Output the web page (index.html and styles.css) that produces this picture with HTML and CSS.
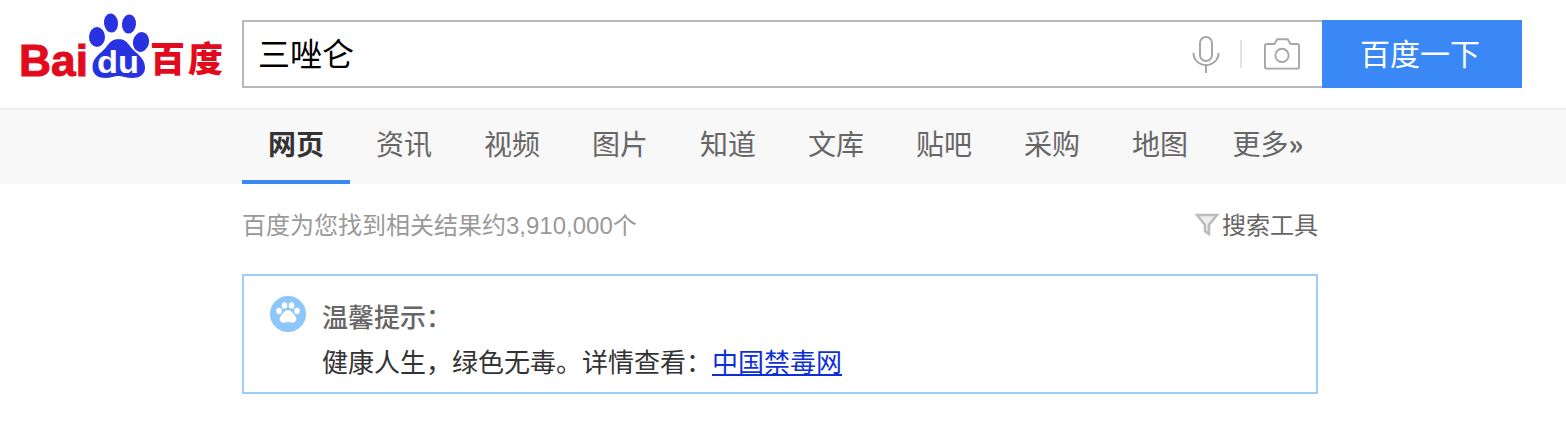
FILE: index.html
```html
<!DOCTYPE html>
<html lang="zh">
<head>
<meta charset="utf-8">
<title>三唑仑_百度搜索</title>
<link rel="stylesheet" href="styles.css">
</head>
<body>
<header class="head">
  <svg class="logo" width="204" height="68" viewBox="0 0 204 68">
    <text class="logo-bai" x="-1" y="64" textLength="69" lengthAdjust="spacingAndGlyphs">Bai</text>
    <g fill="#2932e1">
      <ellipse cx="77" cy="25" rx="8" ry="10"/>
      <ellipse cx="91" cy="11" rx="7" ry="9.500" transform="rotate(-6 91 11)"/>
      <ellipse cx="109" cy="12" rx="7" ry="9.500" transform="rotate(6 109 12)"/>
      <ellipse cx="121" cy="30" rx="8" ry="10" transform="rotate(12 121 30)"/>
      <path d="M98.500 27c7 0 10 5 13 9 4 5 13 9 13.500 19 .5 8-6 11-13 11-5 0-10-2-13.500-2s-8 2-13 2c-7 0-13-3-13-11 0-10 9-14 13-19 3-4 6-9 13.500-9z"/>
    </g>
    <text class="logo-du" x="77" y="61" textLength="42" lengthAdjust="spacingAndGlyphs">du</text>
    <text class="logo-cn" x="130" y="60" textLength="73">百度</text>
  </svg>
  <form class="search">
    <div class="box">
      <span class="query">三唑仑</span>
      <svg class="mic" width="28" height="38" viewBox="0 0 28 38" fill="none" stroke="#a6a6a6" stroke-width="2">
        <rect x="8" y="1" width="12" height="24" rx="6"/>
        <path d="M1.500 17c0 7 5.500 12 12.500 12s12.500-5 12.500-12M14 29v8"/>
      </svg>
      <i class="sep"></i>
      <svg class="cam" width="36" height="33" viewBox="0 0 38 34" fill="none" stroke="#a6a6a6" stroke-width="2">
        <path d="M3 7h8l3-5h11l3 5h7a2 2 0 0 1 2 2v22a2 2 0 0 1-2 2H3a2 2 0 0 1-2-2V9a2 2 0 0 1 2-2z"/>
        <circle cx="19" cy="19" r="7"/>
      </svg>
    </div>
    <button class="go" type="button">百度一下</button>
  </form>
</header>
<nav class="tabs">
  <a class="tab on">网页</a>
  <a class="tab">资讯</a>
  <a class="tab">视频</a>
  <a class="tab">图片</a>
  <a class="tab">知道</a>
  <a class="tab">文库</a>
  <a class="tab">贴吧</a>
  <a class="tab">采购</a>
  <a class="tab">地图</a>
  <a class="tab">更多<b>»</b></a>
</nav>
<main class="main">
  <div class="stats">
    <span>百度为您找到相关结果约3,910,000个</span>
    <span class="tools">
      <svg width="24" height="24" viewBox="0 0 24 24" fill="#ededed" stroke="#bcbcbc" stroke-width="2.500"><path d="M2 3h20l-8 10v9l-4-3v-6z"/></svg>
      搜索工具
    </span>
  </div>
  <section class="tip">
    <svg class="paw" width="36" height="36" viewBox="0 0 36 36">
      <circle cx="18" cy="18" r="18" fill="#8cc6fb"/>
      <g fill="#fff">
        <ellipse cx="9" cy="15" rx="2.800" ry="3.200"/>
        <ellipse cx="14.500" cy="9.500" rx="2.800" ry="3.300"/>
        <ellipse cx="21.500" cy="9.500" rx="2.800" ry="3.300"/>
        <ellipse cx="27" cy="15" rx="2.800" ry="3.200"/>
        <path d="M18 14c3 0 4 2.500 6 4.500 2 2 3 3.500 2 6-1 2-3.500 2.500-5 2-1.500-.3-2-.5-3-.5s-1.500.2-3 .5c-1.500.5-4 0-5-2-1-2.500 0-4 2-6 2-2 3-4.500 6-4.500z"/>
      </g>
    </svg>
    <div class="tip-body">
      <p class="tip-title">温馨提示：</p>
      <p class="tip-text">健康人生，绿色无毒。详情查看：<a class="tip-link">中国禁毒网</a></p>
    </div>
  </section>
</main>
</body>
</html>
```
FILE: styles.css
```css
* { box-sizing: border-box; }
html, body { margin: 0; padding: 0; background: #fff; }
body { font-family: "Liberation Sans", "Noto Sans CJK SC", sans-serif; width: 1566px; height: 426px; overflow: hidden; }
.head { height: 110px; padding: 20px 0 0 20px; display: flex; align-items: flex-start; border-bottom: 2px solid #ededed; }
.logo { display: block; margin-top: -8px; flex: none; width: 204px; height: 68px; overflow: visible; }
.logo-bai { font: 700 45px "Liberation Sans", sans-serif; fill: #e10b1d; stroke: #e10b1d; stroke-width: 1; }
.logo-du { font: 700 31px "Liberation Sans", sans-serif; fill: #fff; }
.logo-cn { font: 900 35px "Noto Sans CJK SC", sans-serif; fill: #e10b1d; }
.search { display: flex; margin-left: 18px; }
.box { width: 1080px; height: 68px; border: 2px solid #b8b8b8; border-right: 0; display: flex; align-items: center; padding-left: 14px; }
.query { font: 32px "Noto Sans CJK SC", sans-serif; color: #000; flex: 1; padding-bottom: 4px; }
.mic { flex: none; margin-top: 2px; }
.sep { width: 2px; height: 28px; background: #e4e4e4; margin: 0 22px 0 20px; flex: none; }
.cam { flex: none; margin-right: 22px; margin-top: -2px; }
.go { width: 200px; height: 68px; border: 0; background: #3a87f6; color: #fff; font: 30px "Noto Sans CJK SC", sans-serif; padding: 0 4px 5px 0; }
.tabs { height: 74px; background: #f8f8f8; padding-left: 242px; display: flex; }
.tab { width: 108px; text-align: center; font: 400 28px/66px "Noto Sans CJK SC", sans-serif; color: #666; }
.tab.on { font-weight: 700; color: #333; border-bottom: 4px solid #3a87f6; }
.main { width: 1076px; margin-left: 242px; }
.stats { height: 90px; padding-top: 26px; display: flex; justify-content: space-between; align-items: flex-start; font-size: 24px; line-height: 32px; color: #999; }
.tools { color: #666; display: flex; align-items: center; gap: 3px; font-family: "Noto Sans CJK SC", sans-serif; line-height: 28px; }
.tip { height: 120px; border: 2px solid #9ecef8; padding: 18px 26px 0; display: flex; gap: 16px; }
.paw { flex: none; margin-top: 2px; }
.tip-body { font: 26px/44px "Noto Sans CJK SC", sans-serif; }
.tip-body p { margin: 0; }
.tip-title { color: #666; font-weight: 500; }
.tip-text { color: #333; line-height: 46px; }
.tip-link { color: #0e2fd6; text-decoration: underline; }
```
